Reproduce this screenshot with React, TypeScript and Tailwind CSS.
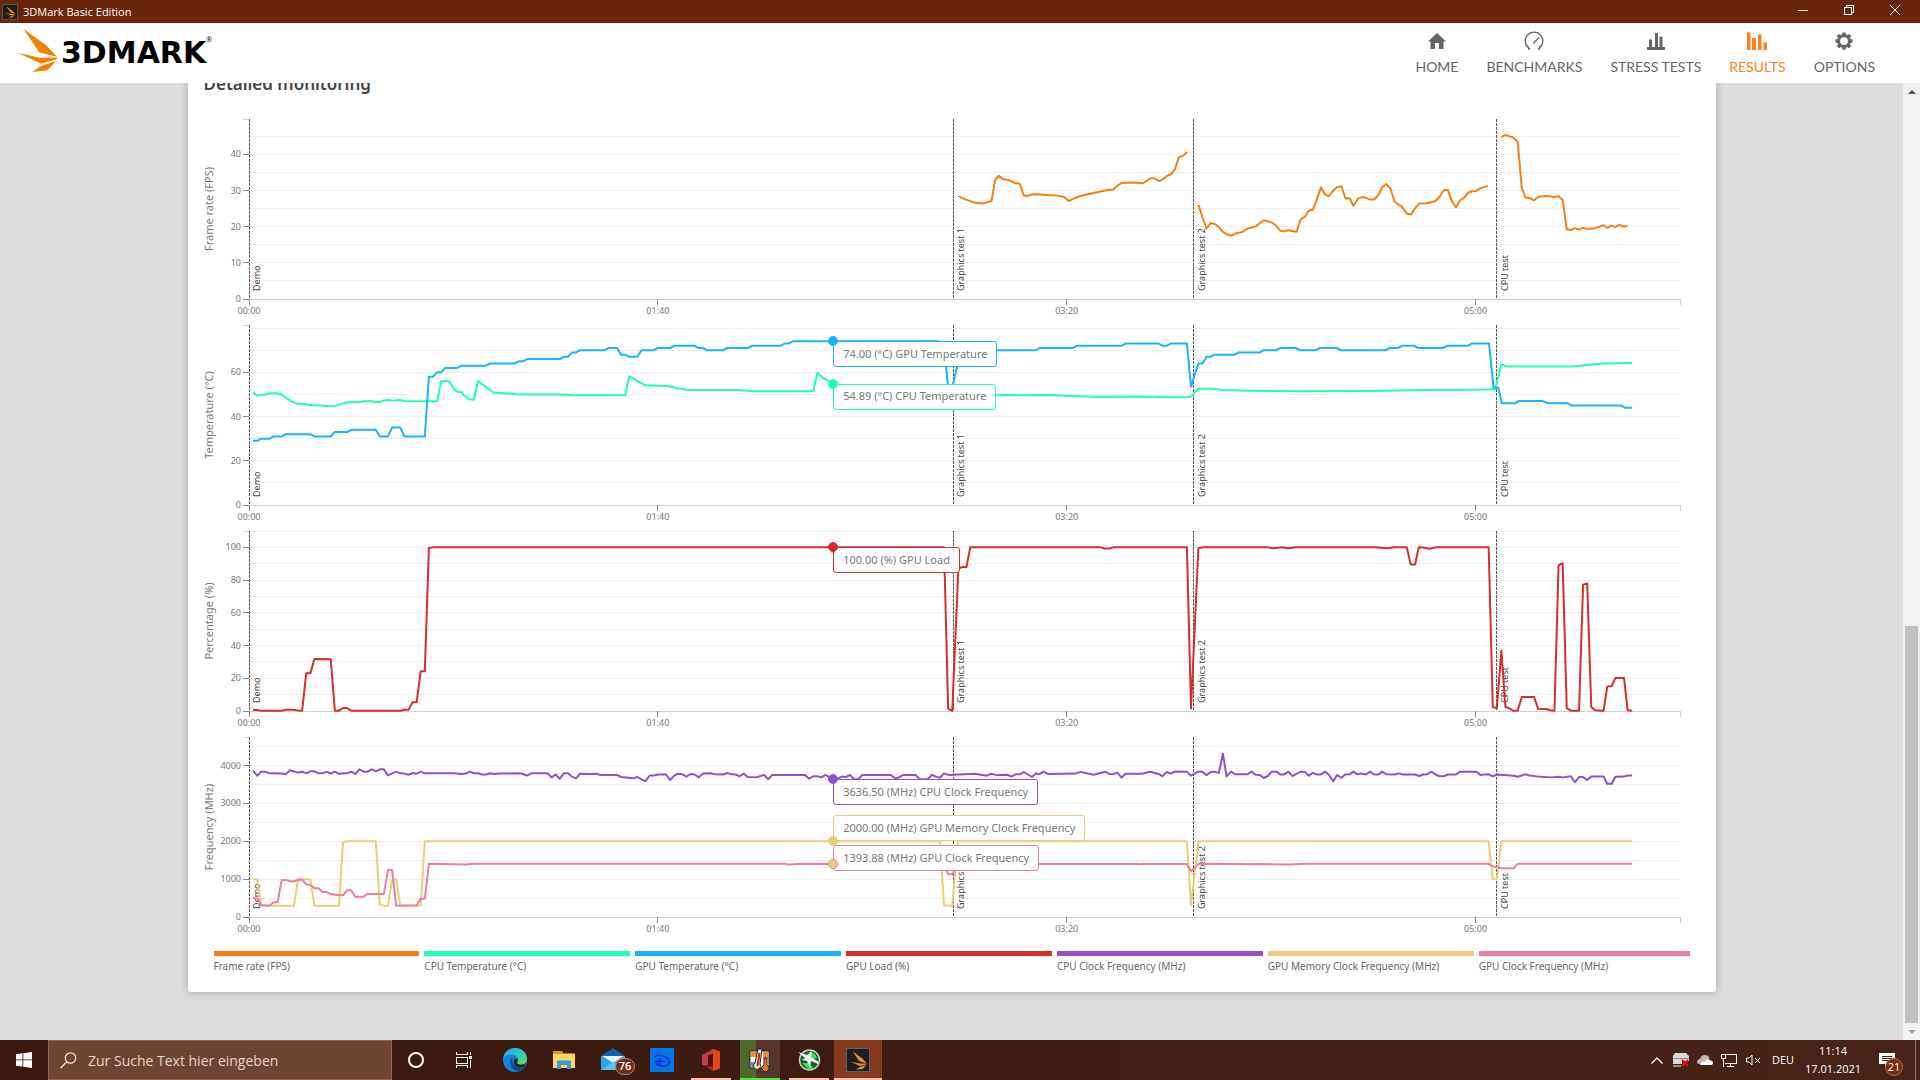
import type { ReactNode } from "react";

const DURATION = 350;
const PLOT_HEIGHT = 180;
const HOVER_TIME = 143;

const COLORS = {
  fps: "#f57f17",
  cpuTemp: "#1dffb9",
  gpuTemp: "#1ab2ff",
  gpuLoad: "#d62e2e",
  cpuClock: "#8e50cf",
  memClock: "#e9cd7c",
  gpuClock: "#e97da6",
};

type Series = { color: string; points: string };

type Tip = {
  color: string;
  value: number;
  text: string;
  shift?: number;
  fill?: string;
};

type ChartData = {
  label: string;
  max: number;
  grid: number;
  ticks: number[];
  series: Series[];
  tips: Tip[];
};

const marks = [
  { time: 0, name: "Demo" },
  { time: 172.3, name: "Graphics test 1" },
  { time: 231.1, name: "Graphics test 2" },
  { time: 305.2, name: "CPU test" },
];

const timeTicks = [
  { time: 0, name: "00:00" },
  { time: 100, name: "01:40" },
  { time: 200, name: "03:20" },
  { time: 300, name: "05:00" },
];

// points are "seconds,value" pairs
const charts: ChartData[] = [
  {
    label: "Frame rate (FPS)",
    max: 49.8,
    grid: 5,
    ticks: [0, 10, 20, 30, 40],
    series: [
      {
        color: COLORS.fps,
        points:
          "173.6,28.5 174.4,27.9 177.6,26.6 179.5,26.4 181.6,27.1 182.5,33 183.4,34.1 184.4,33.1 185.9,32.9 187.4,32.1 188.5,31.9 189.5,28.7 190.4,28.5 191.5,28.9 192.7,29 195.2,28.8 197.8,28.6 199.4,28.2 200.5,27.1 201.7,27.8 203.3,28.5 205.8,29.1 209.7,30.1 211.4,30.3 212.4,31.3 213.4,32.1 216.4,32.2 218.6,32 220.5,33.4 221.4,33.4 222.6,32.6 223.5,33.1 224.6,34.1 225.5,34.5 226.5,36 227.4,39.2 228.4,39.6 229.4,40.7",
      },
      {
        color: COLORS.fps,
        points:
          "232.2,26.1 233.2,22.6 234.2,19.5 235.2,21 236.3,20.7 237.2,19.9 238.2,18.6 239.1,17.9 240.2,17.5 241.2,18.1 242.2,18.3 243.2,18.7 244.2,19.5 245.3,19.8 246.2,20.1 248.2,21.8 250.1,21.2 251.1,20.4 252.2,18.9 253.2,18.7 254.2,19 256.2,18.6 257.2,22 258.2,22.7 259.2,24.4 260.2,24.7 261.2,27.7 262.2,30.9 263.1,29 264.1,28.4 265.3,30.2 266.1,30.9 267.2,31.2 268.2,27.8 269.2,27.9 270.1,25.8 271.2,27.7 272.2,28.2 273.2,28 274.2,27.5 275.2,27.5 276.2,28.7 277.2,31 278.2,31.8 279.2,30.5 280.2,26.9 282,25.5 283.2,23.6 284.2,23.4 285.2,25.1 286.2,26.4 288.1,26.5 290.2,27.1 291.2,28.3 292.2,30.1 293.2,30.2 294.2,27 295.2,25.4 296.2,27.3 297.1,27.9 298.2,29.4 299.1,29.8 300.2,29.9 301.1,30.6 303,31.3",
      },
      {
        color: COLORS.fps,
        points:
          "306.3,44.8 307.3,45.4 308.3,45 309.3,44.6 310.3,43.5 311.3,30.8 312.2,28.1 313.3,27.9 314.3,27.3 315.3,28.2 316.3,28.4 317.3,28.5 319.2,28.2 320.3,28.4 321.3,27.4 322.3,19.3 323.3,19.1 324.3,19.6 325.3,19.2 326.2,19.7 327.3,19.4 329.3,19.6 331.3,20.4 332.2,19.7 333.2,20.3 334.2,19.9 335.2,20.5 336.3,20 337.2,20.3",
      },
    ],
    tips: [],
  },
  {
    label: "Temperature (°C)",
    max: 81.4,
    grid: 10,
    ticks: [0, 20, 40, 60],
    series: [
      {
        color: COLORS.cpuTemp,
        points:
          "1,51 2,49.4 3,49.9 4,49.9 5,50.5 6.9,50.5 8,50 9,48.5 11,46.3 12,45.8 13,45.8 15.4,45.1 19,44.8 21,44.6 22,45.4 23.7,46.3 27,46.6 28,46.9 30,46.9 31,46.6 32,46.6 33,47.3 34,47.5 35,47.2 37,47.5 38,47 40,46.9 46,46.9 47,56 49,56 50,52.8 51,51.1 52,51.1 53,48.8 54,47.8 55,47.6 56,56 59.8,50.9 66,50 77.3,50 79,49.6 92,49.6 93,58.2 95,56 97,54.1 102.3,53.8 103.6,53.4 104.5,52.8 106,52.6 107,52 120,52 123,51.4 138,51.4 139,59.7 140.6,57.3 143,54.9 155,50.5 182.3,49.9 189,49.6 195,49.7 206.6,49 218.4,49.1 225,48.7 229.4,48.8 230.4,49 232.2,52.6 235.8,52.6 238,52 244,51.7 257,51.4 275,51.5 287,52 299,52.1 304.8,52.3 306.3,63.4 308,62.6 323.6,62.6 328.4,63.5 331.4,64 338.3,64.2",
      },
      {
        color: COLORS.gpuTemp,
        points:
          "1,29 2,29 3,30 5,30 6,31 8,31 9,32 15,32 16,31 20,31 21,33 24,33 25,34 31,34 32,31 34,31 35,35 37,35 38,31 43,31 44,58 45,58 46,60 47,60 48,62 51,62 52,63 58,63 59,64 65,64 66,65 67,65 68,66 76,66 77,67 78,67 79,69 80,69 81,70 87,70 88,71 90,71 91,68 92,68 93,67 95,67 96,70 99,70 100,71 103,71 104,72 109,72 110,71 111,71 112,70 116,70 117,71 122,71 123,72 130,72 131,73 132,73 133,74 143,74 168.5,74 170,72 171,53 172,53 173.1,62 174,66 182.4,69 183,70 192.5,70 193.3,71 201.5,71 202.4,72 213.4,72 214.4,73 222.5,73 223.5,72 224.4,72 225.4,73 229.4,73 230.4,53.5 231.4,59.5 232.2,64 233.2,64 234.2,67 235.2,67 236.1,68 241.1,68 242.1,69 247.3,69 248.2,70 251.3,70 252.2,71 256,71 257,70 261,70 262,71 266,71 267,70 278,70 279,71 281,71 282,72 285,72 286,71 292,71 293,72 298,72 299,73 303.3,73 304.4,53 305.6,53 306.4,46 309.6,46 310.5,47 316.4,47 317.7,46 322.5,46 323.6,45 335.6,45 336.5,44 338.3,44",
      },
    ],
    tips: [
      { color: COLORS.gpuTemp, value: 74, text: "74.00 (°C) GPU Temperature" },
      { color: COLORS.cpuTemp, value: 54.89, text: "54.89 (°C) CPU Temperature" },
    ],
  },
  {
    label: "Percentage (%)",
    max: 110,
    grid: 10,
    ticks: [0, 20, 40, 60, 80, 100],
    series: [
      {
        color: COLORS.gpuLoad,
        points:
          "1,.6 2,.6 3,.2 8,.2 9,.7 11,.7 12,.3 13,.2 14,23 15,23 16,31.8 20,31.6 21,.2 22,.2 23,1.8 24,1.8 25,.2 37,.2 38,.7 39,.7 40,5.3 41,5.3 42,24.3 43,24.3 44,99.6 45,100 170,100 171,1.5 172,0 173.5,87 174.4,88 175.5,88 176.4,100 208.3,100 209.2,99.3 210.5,99.3 211.4,100 229.4,100 230.4,1.5 232.2,99.5 233.2,100 249.1,100 250.6,99.5 252.6,100 254.3,99.5 256,100 275.3,100 278.5,99.4 280.1,100 283.2,100 284.1,89.6 285.2,89.6 286.1,100 287.5,99.8 288.7,99.2 290.2,100 303.2,100 304.2,2.4 305.2,1.6 306.3,36.9 307.3,2.4 308.3,1.6 309.3,.1 310.3,.1 311.3,8.6 314.3,8.6 315.3,1.3 317.3,1.2 318.3,.5 319.3,.2 320.3,89 321.3,90.3 322.3,1.8 323.3,.2 325.3,.2 326.3,77.2 327.3,78 328.3,2.4 329.3,.4 331.3,.1 332.2,14.9 333.3,15.3 334.2,20.2 336.3,20.2 337.2,.4 338.3,.2",
      },
    ],
    tips: [{ color: COLORS.gpuLoad, value: 100, text: "100.00 (%) GPU Load" }],
  },
  {
    label: "Frequency (MHz)",
    max: 4757,
    grid: 500,
    ticks: [0, 1000, 2000, 3000, 4000],
    series: [
      {
        color: COLORS.cpuClock,
        points:
          "1,3868 2,3735 3,3841 4,3841 5,3797 8,3790 9,3770 10,3876 12,3815 13,3841 14,3797 15,3850 16,3850 17,3797 18,3797 19,3841 20,3788 21,3841 22,3780 23,3797 24,3797 25,3841 26,3780 27,3903 28,3841 29,3841 30,3903 31,3850 32,3903 33,3903 34,3744 35,3797 36,3841 37,3797 38,3790 39,3760 40,3806 41,3788 42,3841 43,3797 50,3797 52,3780 53,3790 54,3841 55,3800 56,3797 57,3765 58,3765 59,3797 60,3780 61,3790 66,3797 67,3780 68,3735 69,3797 73,3797 74,3690 75,3765 76,3655 77,3797 78,3797 79,3710 80,3664 81,3788 84,3780 85,3785 86,3750 90,3755 91,3700 94,3670 95,3700 96,3635 97,3590 98,3740 99,3740 100,3765 102,3765 103,3620 104,3735 105,3788 106,3770 107,3710 108,3780 109,3765 110,3690 111,3790 113,3797 114,3770 116,3765 117,3805 118,3770 119,3765 120,3720 121,3788 122,3700 124,3690 126,3755 127,3640 128,3755 136,3755 137,3655 138,3720 139,3720 140,3690 141,3755 143,3637 144,3660 145,3710 146,3700 147,3755 148,3640 149,3640 150,3755 157,3755 158,3660 159,3690 160,3755 163,3755 164,3650 166,3640 167,3760 168,3710 169,3680 170,3797 171,3755 177.5,3788 180.5,3735 181.5,3788 183,3750 185.5,3760 186.5,3710 187.5,3770 188.5,3770 189.5,3832 191.5,3700 192.5,3797 193.3,3770 194.3,3841 195.4,3780 202.2,3790 203.3,3835 206.6,3760 209.4,3841 210.4,3780 211.4,3775 212.4,3815 213.4,3685 214.4,3788 218.4,3788 220.4,3841 222.5,3780 223.4,3720 224.5,3835 225.4,3788 226.5,3845 229.4,3841 230.4,3735 232.2,3841 233.1,3841 234.2,3750 235.2,3832 236.2,3841 237.2,3806 238.2,4317 239.1,3717 240.2,3841 241.2,3770 244.2,3770 245.2,3841 246.2,3760 247.2,3755 248.2,3673 249.2,3726 250.1,3841 251.3,3841 252.2,3765 253.1,3765 254.2,3841 255.2,3726 257.2,3841 258.2,3841 259.2,3735 260.2,3810 261.2,3765 262.1,3765 263.2,3841 264.1,3765 265.2,3585 266.1,3750 267.2,3680 268.1,3765 269.2,3770 270.1,3841 271.1,3770 272,3790 273.2,3765 274.2,3841 275.2,3765 276.2,3765 277.2,3841 278.2,3770 280.2,3765 281.2,3795 282.2,3765 285.2,3765 286.2,3726 287.2,3765 288.2,3775 289.2,3841 290.2,3765 291.2,3717 292.2,3717 293.2,3765 295.2,3765 296.2,3841 300.2,3841 301.2,3750 302,3765 303.2,3770 304.2,3720 305.2,3765 309.3,3735 310.3,3705 312.2,3770 313.3,3740 315.3,3710 318.3,3690 320.3,3705 321.3,3690 323.3,3720 324.3,3560 325.3,3700 326.3,3700 327.3,3620 328.3,3715 331.3,3715 332.2,3520 333.3,3520 334.2,3705 336.3,3710 337.2,3740 338.3,3740",
      },
      {
        color: COLORS.memClock,
        points:
          "1,1000 2,1000 3,300 11,300 12,1000 15,1000 16,300 22,300 23,1980 24,2000 31,2000 32,330 33,300 34,300 35,1000 36,1000 37,300 42,300 43,2000 169,2000 170,310 172,300 173.4,2000 229.4,2000 230.4,320 232.2,2000 303.2,2000 304.2,1000 305.2,1000 306.3,2000 338.3,2000",
      },
      {
        color: COLORS.gpuClock,
        points:
          "1,495 2,495 3,320 5,300 6,390 7,390 8,980 9,980 10,945 11,945 12,985 13,985 14,860 15,850 16,760 17,760 18,660 19,660 20,605 22,575 23,575 24,705 25,705 26,535 28,535 29,610 33,610 34,1245 35,1245 36,300 41,310 42,480 43,480 44,1405 53,1390 55,1405 131,1405 132,1388 136,1405 143,1400 170,1395 171,1130 172,1130 173.5,1400 217,1400 218,1392 219,1400 229.4,1400 230.4,1215 231.3,1300 232.2,1405 242,1400 244,1392 247,1403 254,1385 259,1405 303.2,1405 304.2,1335 305.2,1320 306.3,1290 309.3,1290 310.3,1405 338.3,1405",
      },
    ],
    tips: [
      { color: COLORS.cpuClock, value: 3636.5, text: "3636.50 (MHz) CPU Clock Frequency" },
      { color: COLORS.memClock, value: 2000, text: "2000.00 (MHz) GPU Memory Clock Frequency", shift: -26 },
      {
        color: COLORS.gpuClock,
        value: 1393.88,
        text: "1393.88 (MHz) GPU Clock Frequency",
        shift: -19,
        fill: COLORS.memClock,
      },
    ],
  },
];

const legend = [
  { name: "Frame rate (FPS)", color: COLORS.fps },
  { name: "CPU Temperature (°C)", color: COLORS.cpuTemp },
  { name: "GPU Temperature (°C)", color: COLORS.gpuTemp },
  { name: "GPU Load (%)", color: COLORS.gpuLoad },
  { name: "CPU Clock Frequency (MHz)", color: COLORS.cpuClock },
  { name: "GPU Memory Clock Frequency (MHz)", color: COLORS.memClock },
  { name: "GPU Clock Frequency (MHz)", color: COLORS.gpuClock },
];

const percent = (time: number) => `${(time / DURATION) * 100}%`;

function Chart({ label, max, grid, ticks, series, tips }: ChartData) {
  const y = (value: number) => PLOT_HEIGHT - (value / max) * PLOT_HEIGHT;
  const gridLines = Array.from({ length: Math.floor(max / grid) }, (_, i) => (i + 1) * grid);

  return (
    <div className="relative ml-[61px] mr-9 h-[206px]">
      <svg className="block h-full w-full overflow-visible font-['Noto_Sans',sans-serif]">
        <g shapeRendering="crispEdges">
          {gridLines.map((v) => (
            <line key={v} x1="0" x2="100%" y1={y(v)} y2={y(v)} stroke="#ededed" />
          ))}
          <line x1="-6" x2="0" y1="0" y2="0" stroke="#d8d8d8" />
          <line x1="0" x2="100%" y1={PLOT_HEIGHT} y2={PLOT_HEIGHT} stroke="#cfcfcf" />
          <line x1="100%" x2="100%" y1={PLOT_HEIGHT} y2={PLOT_HEIGHT + 6} stroke="#cfcfcf" />
        </g>
        <text
          transform={`translate(-36 ${PLOT_HEIGHT / 2}) rotate(-90)`}
          textAnchor="middle"
          className="fill-[#777] text-[11px]"
        >
          {label}
        </text>
        {ticks.map((v) => (
          <g key={v}>
            <line x1="-6" x2="0" y1={y(v)} y2={y(v)} stroke="#8a8a8a" shapeRendering="crispEdges" />
            <text x="-8" y={y(v) + 3} textAnchor="end" className="fill-[#777] text-[9px]">
              {v}
            </text>
          </g>
        ))}
        {timeTicks.map((t) => (
          <g key={t.name}>
            <line
              x1={percent(t.time)}
              x2={percent(t.time)}
              y1={PLOT_HEIGHT}
              y2={PLOT_HEIGHT + 6}
              stroke="#8a8a8a"
              shapeRendering="crispEdges"
            />
            <text
              x={percent(t.time)}
              y={PLOT_HEIGHT + 15}
              textAnchor="middle"
              className="fill-[#777] text-[9px]"
            >
              {t.name}
            </text>
          </g>
        ))}
        {marks.map((m) => (
          <svg key={m.name} x={percent(m.time)} className="overflow-visible">
            <line
              y1="0"
              y2={PLOT_HEIGHT - 1}
              stroke="#555"
              strokeDasharray="3 1"
              shapeRendering="crispEdges"
            />
            <text transform={`translate(11 ${PLOT_HEIGHT - 8}) rotate(-90)`} className="fill-[#444] text-[9px]">
              {m.name}
            </text>
          </svg>
        ))}
        <svg
          width="100%"
          height={PLOT_HEIGHT}
          viewBox={`0 0 ${DURATION} ${max}`}
          preserveAspectRatio="none"
          className="overflow-visible"
        >
          <g transform={`translate(0 ${max}) scale(1 -1)`}>
            {series.map((s) => (
              <polyline
                key={s.points}
                points={s.points}
                fill="none"
                stroke={s.color}
                strokeWidth="2"
                strokeLinejoin="round"
                vectorEffect="non-scaling-stroke"
              />
            ))}
          </g>
        </svg>
      </svg>
      {tips.map((tip) => (
        <div
          key={tip.text}
          className="absolute flex h-[26px] items-center whitespace-nowrap rounded-[3px] border bg-white px-[9px] font-['Noto_Sans',sans-serif] text-[11px] text-[#777]"
          style={{
            left: percent(HOVER_TIME),
            top: y(tip.value) + (tip.shift ?? 0),
            borderColor: tip.color,
          }}
        >
          {tip.text}
        </div>
      ))}
      {tips.map((tip) => (
        <span
          key={tip.text}
          className="absolute size-[10px] -translate-x-1/2 -translate-y-1/2 rounded-full border"
          style={{
            left: percent(HOVER_TIME),
            top: y(tip.value),
            borderColor: tip.color,
            backgroundColor: tip.fill ?? tip.color,
          }}
        />
      ))}
    </div>
  );
}

function Wings({ className }: { className: string }) {
  return (
    <svg viewBox="50 82 124 136" className={className} aria-hidden="true">
      <path
        fill="currentColor"
        d="M69 84 139 135 172 170 118 156ZM51 157 120 172 168 171 172 176 124 190ZM96 215 122 197 168 182 142 210Z"
      />
    </svg>
  );
}

function TitleBar() {
  return (
    <div className="flex h-[23px] shrink-0 items-center bg-[#6a260d] px-0.5 text-white">
      <span className="flex size-4 items-center justify-center border border-[#555] bg-[#1e1e1e]">
        <Wings className="size-3 text-[#f07f1a]" />
      </span>
      <span className="ml-[5px] flex-1 pt-px text-[11px]">3DMark Basic Edition</span>
      <button aria-label="Minimize" className="flex h-full w-[46px] items-center justify-center pb-1">
        <svg className="size-[10px]" viewBox="0 0 10 10" stroke="currentColor" shapeRendering="crispEdges">
          <path d="M0 5.5h10" />
        </svg>
      </button>
      <button aria-label="Restore" className="flex h-full w-[46px] items-center justify-center pb-1">
        <svg className="size-[10px]" viewBox="0 0 10 10" fill="none" stroke="currentColor" shapeRendering="crispEdges">
          <path d="M.5 2.5h7v7h-7ZM2.5 2.5v-2h7v7h-2" />
        </svg>
      </button>
      <button aria-label="Close" className="flex h-full w-[46px] items-center justify-center pb-1">
        <svg className="size-[10px]" viewBox="0 0 10 10" stroke="currentColor">
          <path d="M0 0 10 10M10 0 0 10" />
        </svg>
      </button>
    </div>
  );
}

function NavItem({ label, active, children }: { label: string; active?: boolean; children: ReactNode }) {
  return (
    <a
      href="#"
      className={`flex flex-col items-center gap-1.5 ${active ? "text-[#ff7f1a]" : "text-[#666]"}`}
    >
      <svg viewBox="0 0 20 20" className="size-5" fill="currentColor" aria-hidden="true">
        {children}
      </svg>
      <span className="font-['Lato',sans-serif] text-[14px] leading-5">{label}</span>
    </a>
  );
}

function Header() {
  return (
    <header className="flex h-[60px] shrink-0 items-center justify-between bg-white pl-[17px] pr-[45px]">
      <a href="#" aria-label="3DMark" className="flex items-center text-black">
        <Wings className="mb-1.5 h-[45px] w-[41px] text-[#f08300]" />
        <span className="ml-[3px] font-['DejaVu_Sans',sans-serif] text-[30px] font-bold leading-none">3DMARK</span>
        <span className="self-start pt-2 text-[7px] leading-none">®</span>
      </a>
      <nav className="flex gap-7 pt-0.5">
        <NavItem label="HOME">
          <path d="M10 2 19 10.500h-2.500V18h-4.500v-6H8v6H3.500v-7.500H1L10 2Z" />
        </NavItem>
        <NavItem label="BENCHMARKS">
          <path
            d="M3.500 14.500 5 18.200 5.500 17.500A8.800 8.800 0 1 1 14.500 17.500L15 18.200 16.500 14.500M9.500 12.500 15 6.500"
            fill="none"
            stroke="currentColor"
            strokeWidth="1.300"
          />
        </NavItem>
        <NavItem label="STRESS TESTS">
          <path d="M1 16h18v3H1ZM3 8.500h3V17H3ZM9 2h3v15H9ZM13.500 5.500h3V17h-3Z" />
        </NavItem>
        <NavItem label="RESULTS" active>
          <path d="M0 1.500h3.500V19H0ZM5 7h4v12H5ZM11 3.500h3.500V19H11ZM16.500 11.500H20V19h-3.500Z" />
        </NavItem>
        <NavItem label="OPTIONS">
          <path
            fillRule="evenodd"
            d="M8.500 1.500h3l.5 2.100 1.200.5 1.900-1.200 2.100 2.100-1.200 1.900.5 1.200 2.100.5v3l-2.100.5-.5 1.200 1.200 1.900-2.100 2.100-1.900-1.200-1.200.5-.5 2.100h-3L8 16.600l-1.200-.5-1.900 1.200-2.100-2.100L4 13.300l-.5-1.200-2.100-.5v-3l2.100-.5L4 6.900 2.800 5l2.100-2.100 1.900 1.200L8 3.600ZM10 6.200a3.900 3.900 0 1 0 0 7.800 3.900 3.900 0 0 0 0-7.800Z"
          />
        </NavItem>
      </nav>
    </header>
  );
}

function ScrollBar() {
  return (
    <div className="flex w-[17px] shrink-0 flex-col bg-[#f1f1f1]">
      <button aria-label="Scroll up" className="flex h-[17px] items-center justify-center text-[#505050]">
        <svg viewBox="0 0 8 4" className="h-1 w-2" fill="currentColor">
          <path d="M4 0 8 4H0Z" />
        </svg>
      </button>
      <div className="flex flex-1 flex-col justify-end px-0.5">
        <div className="h-[43%] bg-[#c1c1c1]" />
      </div>
      <button aria-label="Scroll down" className="flex h-[17px] items-center justify-center text-[#a3a3a3]">
        <svg viewBox="0 0 8 4" className="h-1 w-2" fill="currentColor">
          <path d="M4 4 0 0h8Z" />
        </svg>
      </button>
    </div>
  );
}

function TaskButton({
  label,
  line,
  className = "",
  children,
}: {
  label: string;
  line?: string;
  className?: string;
  children: ReactNode;
}) {
  return (
    <button aria-label={label} className={`relative flex h-10 w-12 items-center justify-center ${className}`}>
      {children}
      {line && <span className={`absolute bottom-0 h-0.5 ${line}`} />}
    </button>
  );
}

function TaskBar() {
  return (
    <footer className="flex h-10 shrink-0 items-center bg-linear-to-r from-[#39170d] to-[#472318] text-white">
      <TaskButton label="Start">
        <svg viewBox="0 0 16 16" className="size-4" fill="currentColor">
          <path d="M0 2.200 6.500 1.300V7.500H0ZM7.300 1.200 16 0V7.500H7.300ZM0 8.300H6.500V14.600L0 13.700ZM7.300 8.300H16V16L7.300 14.800Z" />
        </svg>
      </TaskButton>
      <label className="flex h-10 w-[344px] items-center border border-[#936553] bg-[#6e4433] pl-[11px]">
        <svg viewBox="0 0 17 17" className="size-[17px]" fill="none" stroke="#f0e4df" strokeWidth="1.300">
          <circle cx="10.500" cy="6" r="5.200" />
          <path d="M6.800 9.700.5 16.300" />
        </svg>
        <input
          type="text"
          aria-label="Suche"
          placeholder="Zur Suche Text hier eingeben"
          className="ml-[11px] min-w-0 flex-1 bg-transparent text-[14px] outline-none placeholder:text-[#e6d5cd]"
        />
      </label>
      <TaskButton label="Cortana">
        <span className="size-4 rounded-full border-2 border-white" />
      </TaskButton>
      <TaskButton label="Task view">
        <svg viewBox="0 0 16 16" className="size-4" fill="none" stroke="currentColor" shapeRendering="crispEdges">
          <path d="M.5 0v2.500h11V0M.5 5.500h11v6H.5ZM.5 16v-2.500h11V16M14.500 0v3M14.500 8v8" />
          <path d="M13 4h3v3h-3Z" fill="currentColor" stroke="none" />
        </svg>
      </TaskButton>
      <div className="ml-[3px] flex gap-px">
        <TaskButton label="Edge">
          <svg viewBox="0 0 24 24" className="size-6">
            <defs>
              <linearGradient id="edge-top" x1="0" y1="0" x2="1" y2="1">
                <stop offset="0" stopColor="#2a9fe0" />
                <stop offset=".5" stopColor="#30c7c4" />
                <stop offset="1" stopColor="#62e05a" />
              </linearGradient>
            </defs>
            <circle cx="12" cy="12" r="12" fill="#1683d8" />
            <path fill="url(#edge-top)" d="M.3 10C1 4 6 0 12 0c7 0 12 5 12 10.500 0 4-3 6.200-6 6.200-2.600 0-4-1-4-2.200 0-.7 1.200-1.200 1.200-3C15 8.500 12 6.500 8.500 6.500 5 6.500 1.500 8 .3 10Z" />
            <path fill="#0c4f9e" d="M9.500 9.500C7 11 6.500 14 7.500 17c1.500 4.500 6 6.500 9 6 2.500-1 5-3 6-5.300-3 1.800-7.500 2-10.500-.3-2.500-2-3.300-5-2.500-7.900Z" />
            <path fill="#3b190f" d="M14.800 12.500c-.3 1-1 1.400-.8 2.300.4 1.700 3 2.400 5.500 1.700l3-1-1 3c-3 1.300-6.500 1-9-1-2-1.700-2.300-4.500-1-6.500 1.500-1 3.300 0 3.300 1.500Z" />
          </svg>
        </TaskButton>
        <TaskButton label="Explorer">
          <svg viewBox="0 0 22 20" className="h-5 w-[22px]">
            <path fill="#e29a0b" d="M0 1h9l1.500 2.500H0Z" />
            <path fill="#ffd568" d="M0 3.500h22V18H0Z" />
            <path fill="#3c97dd" d="M4 10.500h14V19h-4v-4H8v4H4Z" />
          </svg>
        </TaskButton>
        <TaskButton label="Mail">
          <svg viewBox="0 0 24 24" className="size-6">
            <path fill="#1260b0" d="M0 8 12 0l12 8v4H0Z" />
            <path fill="#2aa3ea" d="M0 8h24v14H0Z" />
            <path fill="#f3f3f3" d="M1.500 8h21L12 15Z" />
            <path fill="#55c3f7" d="M0 22 12 13.500 24 22Z" />
          </svg>
          <span className="absolute bottom-[5px] left-[26px] flex h-[17px] w-5 items-center justify-center rounded-full border border-[#b08d80] bg-[#712a12] text-[11px] font-semibold">
            76
          </span>
        </TaskButton>
        <TaskButton label="Disney+">
          <svg viewBox="0 0 24 24" className="size-6">
            <path fill="#0578dc" d="M0 0h24v24H0Z" />
            <path
              fill="none"
              stroke="#1328ee"
              strokeWidth="1.600"
              strokeLinecap="round"
              d="M5 8.500C8 6 19 8 19.500 14c0 4-6 5-10 3.500-2-1-4.500-2.500-4-3.500 1-1 6-1 9-.5M10 10.500V17"
            />
          </svg>
        </TaskButton>
        <TaskButton label="Office" line="w-10 bg-[#ffc0ad]">
          <svg viewBox="0 0 18 22" className="h-[22px] w-[18px]">
            <path fill="#c9384c" d="M0 6 11 0v4.500L6 6.500v9L3.500 17 0 16Z" />
            <path fill="#e8441c" d="M11 0 18 2.500v17L11 22Z" />
            <path fill="#b5271b" d="M3.500 17.500H11V22Z" />
          </svg>
        </TaskButton>
        <TaskButton label="Temperature monitor">
          <span className="absolute inset-y-0 left-1 w-4 bg-[#4f692d]" />
          <span className="absolute inset-y-0 left-5 w-6 bg-[#57352b]" />
          <span className="absolute bottom-0 h-0.5 w-10 bg-[#4fe83c]" />
          <svg viewBox="0 0 24 24" className="relative size-6">
            <path fill="#fff" stroke="#222" d="M2 3h19v17H2Z" />
            <path fill="#f08a3c" d="M3 4h6v5H3ZM15 4h5v7h-5Z" />
            <path fill="#5d8fe0" d="M3 14h6v5H3Z" />
            <path fill="#d8ecd2" stroke="#222" d="M10 1h4l-2 15a3.500 3.500 0 1 1-5-1Z" />
            <path stroke="#d81414" strokeWidth="2" d="M11.500 5 9.500 18" />
            <path fill="#f0781c" stroke="#222" d="M16 10h3v7a3.500 3.500 0 1 1-3 0Z" />
          </svg>
        </TaskButton>
        <TaskButton label="Jet tool" line="w-10 bg-[#ffc0ad]">
          <svg viewBox="0 0 24 24" className="size-6">
            <circle cx="12.500" cy="12" r="10" fill="#15602a" stroke="#c8d4cb" strokeWidth="1.500" />
            <path fill="#3ee05a" d="M12 4a8 8 0 0 1 8 6l-5 1ZM5 15l6 6h6l-5-6Z" />
            <path fill="#f1f1f1" d="M1 4 10 7 15 3 14 9 22 14 21 16 14 13 13 20 10 13 5 12 8 10Z" />
          </svg>
        </TaskButton>
        <TaskButton label="3DMark" line="w-12 bg-[#ffc0ad]" className="bg-[#873a1d]">
          <span className="flex size-6 items-center justify-center border border-[#5d6468] bg-[#1e1e1e]">
            <Wings className="size-[19px] text-[#f08a2a]" />
          </span>
        </TaskButton>
      </div>
      <div className="ml-auto flex h-10 items-center">
        <button aria-label="Hidden icons" className="flex w-6 justify-center">
          <svg viewBox="0 0 12 7" className="h-[7px] w-3" fill="none" stroke="currentColor" strokeWidth="1.300">
            <path d="M.5 6.500 6 1l5.500 5.500" />
          </svg>
        </button>
        <span className="flex w-6 justify-center">
          <svg viewBox="0 0 16 14" className="h-[14px] w-4">
            <path fill="#d8d8d8" d="M2 0h11l3 3v5H9v3H0V3Z" />
            <path fill="#8f8f8f" d="M0 5h16v1H0ZM0 12h8v2H0Z" />
            <path stroke="#e01515" strokeWidth="2" d="M9 7l6 6M15 7l-6 6" />
          </svg>
        </span>
        <span className="flex w-6 justify-center">
          <svg viewBox="0 0 16 10" className="h-[10px] w-4">
            <path fill="#c5b5b0" d="M0 7C0 5 1.500 4 3 4c.5-2.500 2.500-4 5-4 2.200 0 4 1.300 4.500 3L6 9H2C1 9 0 8 0 7Z" />
            <path fill="#fff" d="M3 10C4 7 6 6 8 6.500 9.500 4 12 3.500 13.500 5.500 15 5.500 16 6.500 16 8c0 1-.8 2-2 2Z" />
          </svg>
        </span>
        <span className="flex w-6 justify-center">
          <svg viewBox="0 0 16 13" className="h-[13px] w-4" fill="none" stroke="currentColor" shapeRendering="crispEdges">
            <path d="M4.500.5h11v8.500H3.500M.5.5h4v4h-4ZM2.500 4.500v8M9.500 9v3M6 12.500h7" />
          </svg>
        </span>
        <span className="flex w-6 justify-center">
          <svg viewBox="0 0 15 12" className="h-3 w-[15px]" fill="none" stroke="currentColor">
            <path d="M.5 4v4h2.500l3 3V1L3 4ZM9 4l5 5M14 4 9 9" />
          </svg>
        </span>
        <span className="w-9 text-center text-[11px]">DEU</span>
        <div className="mr-2 w-16 text-center text-[11px] leading-[18px]">
          <div>11:14</div>
          <div>17.01.2021</div>
        </div>
        <button aria-label="Notifications" className="relative flex h-10 w-[42px] items-center pl-1.5">
          <svg viewBox="0 0 16 16" className="size-4">
            <path fill="#fff" d="M0 1h16v11H9l-3 3.500V12H0Z" />
            <path stroke="#472318" d="M3 4.500h10M3 6.500h10M3 8.500h7" />
          </svg>
          <span className="absolute bottom-1 left-3 flex size-[18px] items-center justify-center rounded-full border border-[#a8705c] bg-[#7a2c12] text-[11px]">
            21
          </span>
        </button>
        <span className="mr-1 h-10 w-px bg-[#8d776f]" />
      </div>
    </footer>
  );
}

export default function App() {
  return (
    <div className="flex h-screen flex-col overflow-hidden font-['Open_Sans','Noto_Sans',sans-serif]">
      <TitleBar />
      <Header />
      <div className="flex min-h-0 flex-1 bg-[#dcdcdc]">
        <main className="flex min-w-0 flex-1 flex-col justify-end overflow-hidden pb-12">
          <section className="mx-auto w-full max-w-[1528px] rounded-[3px] bg-white pt-10 shadow-[0_0_8px_rgba(0,0,0,0.25)]">
            <h2 className="mb-[21px] pl-4 font-['Noto_Sans',sans-serif] text-[17px] font-semibold leading-7 text-[#444]">
              Detailed monitoring
            </h2>
            {charts.map((chart) => (
              <Chart key={chart.label} {...chart} />
            ))}
            <ul className="mx-[26px] mt-2 grid grid-cols-7 pb-[18px] font-['Noto_Sans',sans-serif] text-[10px] text-[#666]">
              {legend.map((item) => (
                <li key={item.name} className="mr-[5px] last:mr-0">
                  <div className="mb-[3px] h-[5px]" style={{ backgroundColor: item.color }} />
                  <div className="leading-[15px]">{item.name}</div>
                </li>
              ))}
            </ul>
          </section>
        </main>
        <ScrollBar />
      </div>
      <TaskBar />
    </div>
  );
}
